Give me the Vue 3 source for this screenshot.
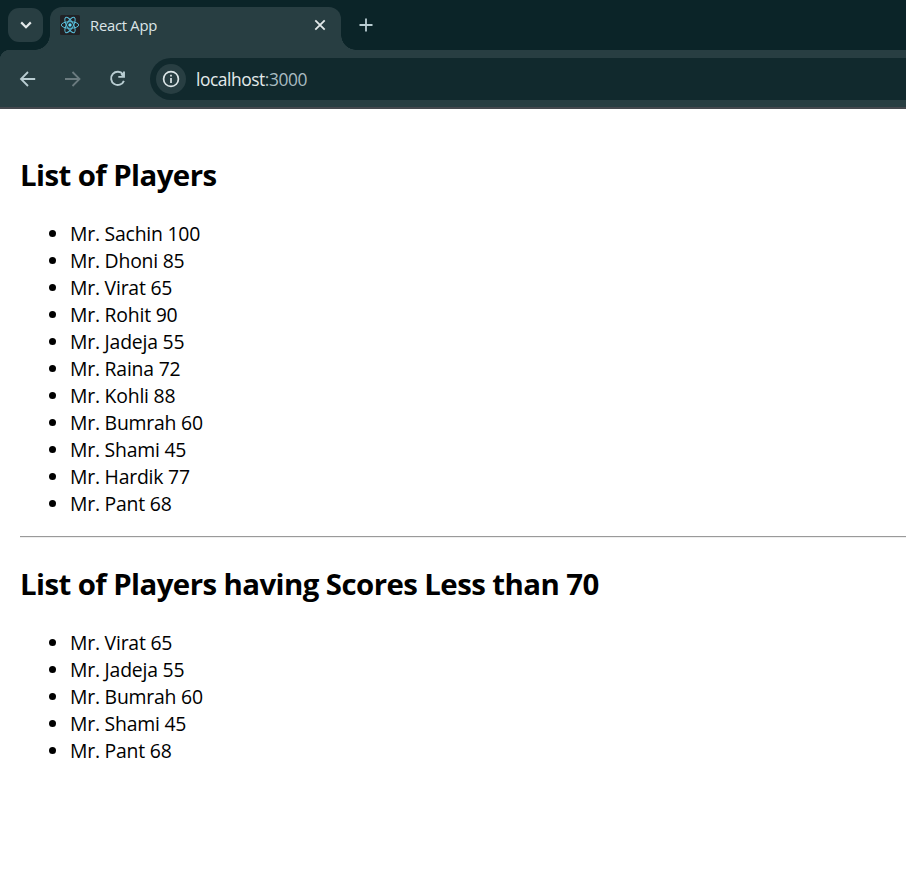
<script setup>
const players = [
  { name: 'Mr. Sachin', score: 100 },
  { name: 'Mr. Dhoni', score: 85 },
  { name: 'Mr. Virat', score: 65 },
  { name: 'Mr. Rohit', score: 90 },
  { name: 'Mr. Jadeja', score: 55 },
  { name: 'Mr. Raina', score: 72 },
  { name: 'Mr. Kohli', score: 88 },
  { name: 'Mr. Bumrah', score: 60 },
  { name: 'Mr. Shami', score: 45 },
  { name: 'Mr. Hardik', score: 77 },
  { name: 'Mr. Pant', score: 68 },
]
const below70 = players.filter((p) => p.score < 70)
</script>

<template>
  <div class="window">
    <header class="tabstrip">
      <button class="search-tabs" aria-label="Search tabs">
        <svg width="35" height="34" viewBox="0 0 35 34"><path d="M13.2 14.4l4.8 4.8 4.8-4.8" fill="none" stroke="#e3e9ea" stroke-width="2.2" /></svg>
      </button>
      <div class="tab">
        <svg class="favicon" width="20" height="20" viewBox="0 0 20 20">
          <rect width="20" height="20" rx="1.5" fill="#212225" />
          <g fill="none" stroke="#58bcd8" stroke-width="1">
            <ellipse cx="10" cy="10" rx="8.7" ry="3.3" />
            <ellipse cx="10" cy="10" rx="8.7" ry="3.3" transform="rotate(60 10 10)" />
            <ellipse cx="10" cy="10" rx="8.7" ry="3.3" transform="rotate(120 10 10)" />
          </g>
          <circle cx="10" cy="10" r="1.7" fill="#61dafb" />
        </svg>
        <span class="tab-title">React App</span>
        <svg class="close" width="12" height="12" viewBox="0 0 12 12"><path d="M1.3 1.3l9.4 9.4M10.7 1.3l-9.4 9.4" stroke="#e3e9ea" stroke-width="1.8" /></svg>
      </div>
      <svg class="plus" width="14" height="14" viewBox="0 0 14 14"><path d="M7 .5v13M.5 7h13" stroke="#b9cdd2" stroke-width="1.8" /></svg>
    </header>

    <nav class="toolbar">
      <svg class="nav-icon" width="20" height="20" viewBox="0 0 20 20"><path d="M17.2 10H3.5M10 3L3 10l7 7" fill="none" stroke="#b9cdd2" stroke-width="1.8" /></svg>
      <svg class="nav-icon" width="20" height="20" viewBox="0 0 20 20"><path d="M2 10h14M9.5 3l7 7-7 7" fill="none" stroke="#6b7b7f" stroke-width="1.8" /></svg>
      <svg class="nav-icon" width="20" height="20" viewBox="0 0 20 20"><path d="M15 5.4A6.6 6.6 0 1 0 15.9 11.8M16 2.4v5.5h-5.7M15.7 7.5l-2.4-2.6" fill="none" stroke="#b9cdd2" stroke-width="1.9" /></svg>
      <div class="address">
        <span class="site-info">
          <svg width="18" height="18" viewBox="0 0 18 18"><circle cx="9" cy="9" r="7.4" fill="none" stroke="#dce5e7" stroke-width="1.7" /><path d="M9 8v5M9 4.8v1.8" stroke="#dce5e7" stroke-width="1.7" /></svg>
        </span>
        <span class="url"><span class="host">localhost</span>:3000</span>
      </div>
    </nav>

    <main class="page">
      <h2>List of Players</h2>
      <ul>
        <li v-for="p in players" :key="p.name">{{ p.name }} {{ p.score }}</li>
      </ul>
      <hr />
      <h2>List of Players having Scores Less than 70</h2>
      <ul>
        <li v-for="p in below70" :key="p.name">{{ p.name }} {{ p.score }}</li>
      </ul>
    </main>
  </div>
</template>

<style>
body {
  margin: 0;
  background: #fff;
}
</style>

<style scoped>
.window {
  height: 887px;
  overflow: hidden;
  background: #fff;
  font-family: 'Open Sans', 'Noto Sans', sans-serif;
}
svg {
  display: block;
  flex: none;
}
.tabstrip {
  display: flex;
  box-sizing: border-box;
  height: 50px;
  padding: 7px 0 0 8px;
  background: #0b2428;
}
.search-tabs {
  width: 35px;
  height: 34px;
  margin: 1px 7px 0 0;
  padding: 0;
  border: 0;
  border-radius: 11px;
  background: #283e42;
}
.tab {
  position: relative;
  display: flex;
  align-items: center;
  box-sizing: border-box;
  width: 291px;
  height: 43px;
  padding: 0 15px 7px 10px;
  border-radius: 12px 12px 0 0;
  background: #283e42;
}
.tab::before,
.tab::after {
  content: '';
  position: absolute;
  bottom: 0;
  width: 15px;
  height: 15px;
}
.tab::before {
  left: -15px;
  background: radial-gradient(circle at 0 0, transparent 14.5px, #283e42 15px);
}
.tab::after {
  right: -15px;
  background: radial-gradient(circle at 100% 0, transparent 14.5px, #283e42 15px);
}
.tab-title {
  flex: 1;
  margin-left: 10px;
  color: #dce5e7;
  font-size: 14.8px;
  line-height: 20px;
  letter-spacing: -0.25px;
}
.plus {
  margin: 11px 0 0 18px;
}
.toolbar {
  display: flex;
  align-items: center;
  box-sizing: border-box;
  height: 59px;
  padding-left: 18px;
  border-bottom: 2px solid #45484e;
  background: radial-gradient(circle at 10px 10px, #283e42 10px, #0b2428 10.5px) 0 0 / 10px 10px no-repeat,
    linear-gradient(#283e42, #283e42) 10px 0 no-repeat,
    linear-gradient(#283e42, #283e42) 0 10px no-repeat;
}
.nav-icon {
  margin-right: 25px;
}
.address {
  display: flex;
  flex: 1;
  align-items: center;
  box-sizing: border-box;
  height: 42px;
  margin: 1px 0 0 -3px;
  padding-left: 6px;
  border-radius: 21px 0 0 21px;
  background: #11292d;
}
.site-info {
  display: flex;
  align-items: center;
  justify-content: center;
  width: 30px;
  height: 30px;
  border-radius: 50%;
  background: #283e42;
}
.url {
  margin-left: 10px;
  color: #a9bcc1;
  font-size: 17.4px;
  letter-spacing: -0.45px;
}
.host {
  color: #e3eaeb;
}
.page {
  padding: 46px 0 0 20px;
  color: #000;
}
h2 {
  margin: 0 0 25px;
  font-size: 29.4px;
  font-weight: 700;
  line-height: 40px;
  letter-spacing: -0.57px;
  white-space: nowrap;
}
ul {
  margin: 0;
  padding: 0 0 0 50px;
  list-style: disc;
  font-size: 19.4px;
  line-height: 27px;
  letter-spacing: -0.22px;
}
hr {
  margin: 19px 0 26px;
  border: 0;
  border-top: 1px solid #9a9a9a;
  border-bottom: 1px solid #eee;
}
</style>
